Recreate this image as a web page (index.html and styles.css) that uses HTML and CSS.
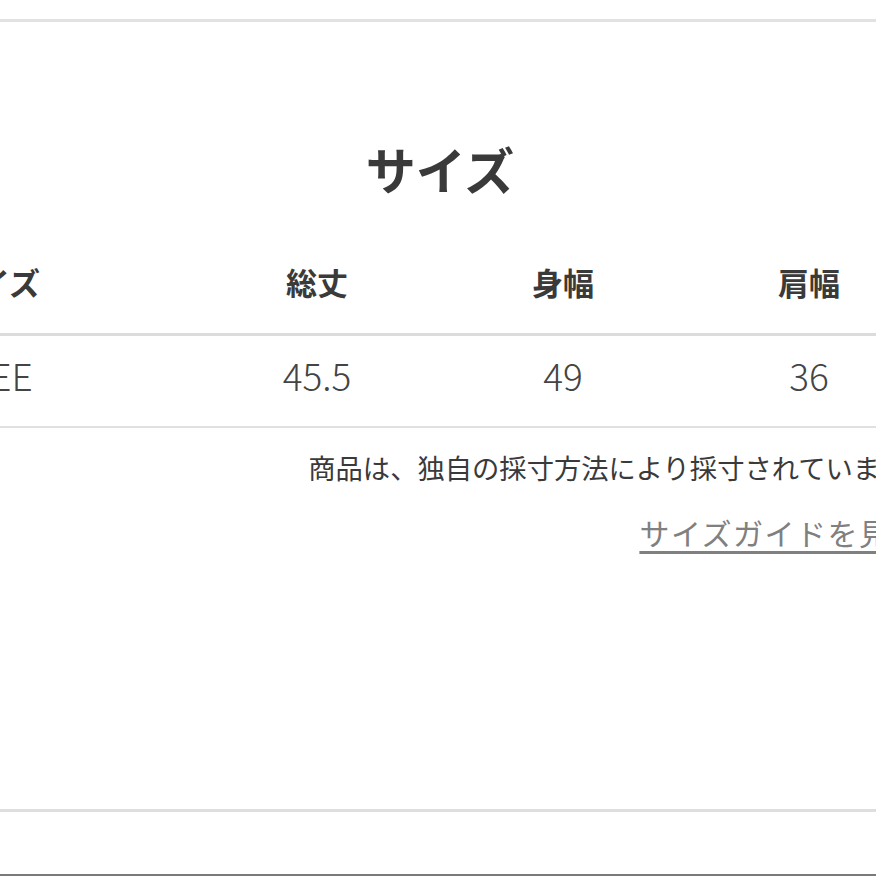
FILE: index.html
```html
<!DOCTYPE html>
<html lang="ja">
<head>
<meta charset="utf-8">
<link rel="stylesheet" href="styles.css">
</head>
<body>
<div class="page">
  <section class="size">
    <h2 class="size-title">サイズ</h2>
    <div class="size-table">
      <div class="row head">
        <div class="cell first">サイズ</div>
        <div class="cell">総丈</div>
        <div class="cell">身幅</div>
        <div class="cell">肩幅</div>
      </div>
      <div class="row data">
        <div class="cell first">FREE</div>
        <div class="cell">45.5</div>
        <div class="cell">49</div>
        <div class="cell">36</div>
      </div>
    </div>
    <p class="note">商品は、独自の採寸方法により採寸されています。</p>
    <div class="guide-wrap"><a class="guide" href="#">サイズガイドを見る</a></div>
  </section>
  <div class="bottom-bar"></div>
</div>
</body>
</html>
```
FILE: styles.css
```css
html, body {
  margin: 0;
  padding: 0;
  overflow: hidden;
  background: #fff;
}
body {
  font-family: "Noto Sans CJK JP", "Noto Sans", sans-serif;
  color: #333;
}
.page {
  padding-top: 19px;
}
.size {
  border-top: 3px solid #e2e2e2;
  border-bottom: 3px solid #dedede;
  height: 793px;
  box-sizing: border-box;
  width: 984px;
  margin-left: -52px;
  display: flex;
  flex-direction: column;
}
.size-title {
  margin: 118px 0 0;
  font-size: 50px;
  line-height: 56px;
  font-weight: 700;
  text-align: center;
  color: #3a3a3a;
}
.size-table {
  margin-top: 39px;
}
.row {
  display: grid;
  grid-template-columns: repeat(4, 246px);
  align-items: center;
}
.row.head {
  height: 94px;
  padding-bottom: 4px;
  border-bottom: 3px solid #dcdcdc;
  font-size: 31px;
  font-weight: 700;
  color: #3a3a3a;
}
.row.data {
  box-sizing: border-box;
  height: 92px;
  padding-bottom: 12px;
  border-bottom: 2px solid #e0e0e0;
  font-size: 37px;
  font-weight: 300;
  color: #444;
}
.cell {
  text-align: center;
  line-height: 1.2;
}
.cell.first {
  text-align: left;
}
.note {
  margin: 21px 0 0 0;
  text-align: right;
  font-size: 27.3px;
  line-height: 36px;
  color: #3a3a3a;
}
.guide-wrap {
  margin: 27px 10px 0 0;
  text-align: right;
}
.guide {
  font-size: 30px;
  letter-spacing: 1.5px;
  line-height: 40px;
  color: #808080;
  text-decoration: underline;
  text-decoration-thickness: 3px;
  text-underline-offset: 6px;
}
.bottom-bar {
  margin-top: 62px;
  height: 2px;
  background: #7a7a7a;
}
```
